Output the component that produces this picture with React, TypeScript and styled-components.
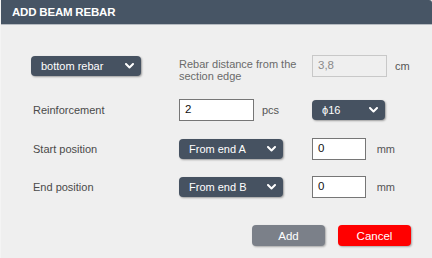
import React from 'react';
import styled, { createGlobalStyle } from 'styled-components';

const GlobalStyle = createGlobalStyle`
  html, body {
    margin: 0;
    padding: 0;
    background: #efefef;
  }
  body {
    font-family: 'Liberation Sans', Arial, sans-serif;
  }
`;

const Dialog = styled.div`
  width: 432px;
  height: 258px;
  background: #efefef;
  box-sizing: border-box;
  border-left: 1px solid #f4f4f4;
  overflow: hidden;
`;

const Header = styled.div`
  height: 24px;
  background: #475565;
  border-bottom: 1px solid #b6bbc1;
  border-top-right-radius: 3px;
  display: flex;
  align-items: center;
  padding-left: 11px;
  color: #fff;
  font-size: 11.5px;
  font-weight: bold;
  letter-spacing: -0.2px;
`;

const Body = styled.div`
  padding: 30px 21px 0 30px;
`;

const Row = styled.div<{ $mt: number }>`
  display: grid;
  grid-template-columns: 148px 133px 83px auto;
  grid-template-rows: 22px;
  align-items: center;
  margin-top: ${(p) => p.$mt}px;
`;

const Label = styled.div`
  font-size: 11px;
  color: #4a4a4a;
  padding-left: 2px;
`;

const Hint = styled.div`
  align-self: start;
  font-size: 11px;
  line-height: 12px;
  color: #6a6a6a;
  margin-top: 3px;
  white-space: nowrap;
`;

const Unit = styled.span`
  font-size: 11px;
  color: #555;
`;

const Inline = styled.div<{ $gap: number }>`
  display: flex;
  align-items: center;
  gap: ${(p) => p.$gap}px;
`;

const SelectBox = styled.div<{ $w: number }>`
  width: ${(p) => p.$w}px;
  height: 20px;
  box-sizing: border-box;
  background: #465261;
  border-radius: 4px;
  box-shadow: 1px 1px 2px rgba(0, 0, 0, 0.35);
  display: flex;
  align-items: center;
  justify-content: space-between;
  padding: 0 7px 0 10px;
  color: #fff;
  font-size: 11px;
`;

const Field = styled.div<{ $w: number; $disabled?: boolean }>`
  width: ${(p) => p.$w}px;
  height: 22px;
  box-sizing: border-box;
  background: ${(p) => (p.$disabled ? '#efefef' : '#fff')};
  border: 1px solid ${(p) => (p.$disabled ? '#c8c8c8' : '#767676')};
  color: ${(p) => (p.$disabled ? '#8a8a8a' : '#111')};
  font-size: 11.5px;
  padding: 3px 0 0 5px;
`;

const Footer = styled.div`
  display: flex;
  justify-content: flex-end;
  gap: 13px;
  margin-top: 27px;
`;

const Button = styled.div<{ $bg: string }>`
  width: 73px;
  height: 21px;
  border-radius: 4px;
  background: ${(p) => p.$bg};
  box-shadow: 1px 1px 2px rgba(0, 0, 0, 0.3);
  color: #fff;
  font-size: 11.5px;
  display: flex;
  align-items: center;
  justify-content: center;
`;

const Chevron = () => (
  <svg width="9" height="6" viewBox="0 0 9 6">
    <polyline
      points="1,1 4.5,4.5 8,1"
      fill="none"
      stroke="#fff"
      strokeWidth="2"
      strokeLinecap="round"
      strokeLinejoin="round"
    />
  </svg>
);

const Select: React.FC<{ w: number; children: React.ReactNode }> = ({ w, children }) => (
  <SelectBox $w={w}>
    <span>{children}</span>
    <Chevron />
  </SelectBox>
);

export default function App() {
  return (
    <Dialog>
      <GlobalStyle />
      <Header>ADD BEAM REBAR</Header>
      <Body>
        <Row $mt={0}>
          <Select w={110}>bottom rebar</Select>
          <Hint>
            Rebar distance from the
            <br />
            section edge
          </Hint>
          <Field $w={75} $disabled>
            3,8
          </Field>
          <Unit>cm</Unit>
        </Row>
        <Row $mt={22}>
          <Label>Reinforcement</Label>
          <Inline $gap={8}>
            <Field $w={75}>2</Field>
            <Unit>pcs</Unit>
          </Inline>
          <Select w={73}>ϕ16</Select>
        </Row>
        <Row $mt={17}>
          <Label>Start position</Label>
          <Select w={104}>From end A</Select>
          <Inline $gap={11}>
            <Field $w={73}>0</Field>
            <Unit>mm</Unit>
          </Inline>
        </Row>
        <Row $mt={16}>
          <Label>End position</Label>
          <Select w={104}>From end B</Select>
          <Inline $gap={11}>
            <Field $w={73}>0</Field>
            <Unit>mm</Unit>
          </Inline>
        </Row>
        <Footer>
          <Button $bg="#7b8089">Add</Button>
          <Button $bg="#ff0000">Cancel</Button>
        </Footer>
      </Body>
    </Dialog>
  );
}
